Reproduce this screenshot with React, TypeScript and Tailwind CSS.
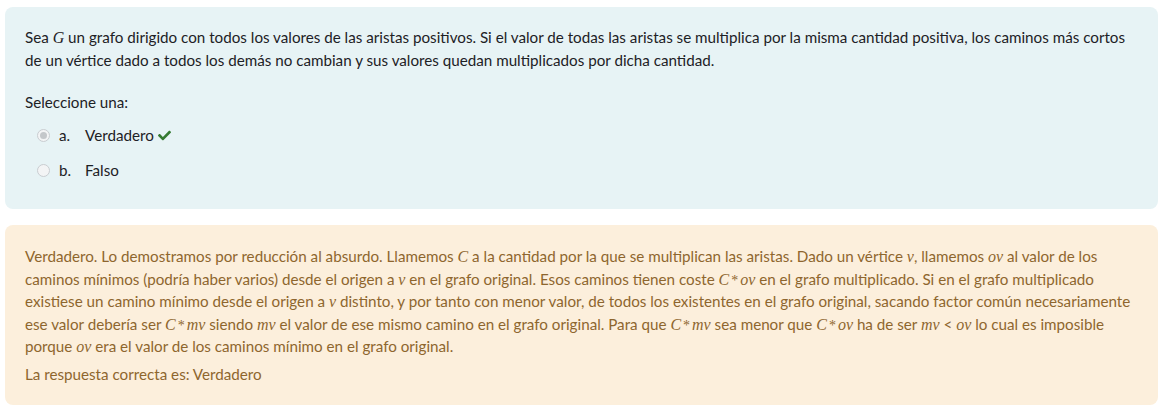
import React from 'react';

const M = ({ children }: { children: React.ReactNode }) => (
  <span className="italic text-[16px] leading-none" style={{ fontFamily: '"Liberation Serif", "DejaVu Serif", serif' }}>
    {children}
  </span>
);

// C * x rendered like MathJax: italic C, raised asterisk, thin spacing
const Prod = ({ x }: { x: string }) => (
  <>
    <M>C</M>
    <span className="mx-[2px] text-[14px] leading-none" style={{ fontFamily: '"Liberation Serif", serif' }}>*</span>
    <M>{x}</M>
  </>
);

function Radio({ checked }: { checked?: boolean }) {
  return (
    <span className="relative inline-flex h-[13px] w-[13px] items-center justify-center rounded-full border border-[#c9cdd1] bg-[#f3f4f5]">
      {checked && <span className="h-[7px] w-[7px] rounded-full bg-[#c4c7ca]" />}
    </span>
  );
}

function Check() {
  return (
    <svg viewBox="0 0 512 512" className="ml-1 h-[13px] w-[13px] fill-[#357a32]">
      <path d="M173.9 439.4l-166.4-166.4c-10-10-10-26.2 0-36.2l36.2-36.2c10-10 26.2-10 36.2 0L192 312.7 432.1 72.6c10-10 26.2-10 36.2 0l36.2 36.2c10 10 10 26.2 0 36.2l-294.4 294.4c-10 10-26.2 10-36.2 0z" />
    </svg>
  );
}

export default function App() {
  return (
    <div
      className="flex w-[1163px] flex-col gap-4 bg-white px-[5px] pt-[7px] text-[15.2px] leading-[22.5px]"
      style={{ fontFamily: 'Lato, "Segoe UI", "Liberation Sans", sans-serif' }}
    >
      {/* question */}
      <div className="h-[202px] rounded-lg bg-[#e7f3f5] px-5 pt-[19px] text-[#1d2125]">
        <p className="whitespace-nowrap">
          Sea <M>G</M> un grafo dirigido con todos los valores de las aristas positivos. Si el valor de todas las aristas se multiplica por la misma cantidad positiva, los caminos más cortos
          <br />
          de un vértice dado a todos los demás no cambian y sus valores quedan multiplicados por dicha cantidad.
        </p>
        <p className="mt-[20px]">Seleccione una:</p>
        <div className="mt-[4px] flex flex-col">
          <div className="flex h-[35px] items-center pl-[12px]">
            <Radio checked />
            <span className="ml-[9px] w-[26px]">a.</span>
            <span>Verdadero</span>
            <Check />
          </div>
          <div className="flex h-[35px] items-center pl-[12px]">
            <Radio />
            <span className="ml-[9px] w-[26px]">b.</span>
            <span>Falso</span>
          </div>
        </div>
      </div>

      {/* feedback */}
      <div className="h-[180px] rounded-lg bg-[#fcefdc] px-5 pt-[20px] text-[#8e662e]">
        <p className="whitespace-nowrap">
          Verdadero. Lo demostramos por reducción al absurdo. Llamemos <M>C</M> a la cantidad por la que se multiplican las aristas. Dado un vértice <M>v</M>, llamemos <M>ov</M> al valor de los
          <br />
          caminos mínimos (podría haber varios) desde el origen a <M>v</M> en el grafo original. Esos caminos tienen coste <Prod x="ov" /> en el grafo multiplicado. Si en el grafo multiplicado
          <br />
          existiese un camino mínimo desde el origen a <M>v</M> distinto, y por tanto con menor valor, de todos los existentes en el grafo original, sacando factor común necesariamente
          <br />
          ese valor debería ser <Prod x="mv" /> siendo <M>mv</M> el valor de ese mismo camino en el grafo original. Para que <Prod x="mv" /> sea menor que <Prod x="ov" /> ha de ser <M>mv</M> &lt; <M>ov</M> lo cual es imposible
          <br />
          porque <M>ov</M> era el valor de los caminos mínimo en el grafo original.
        </p>
        <p className="mt-[5px]">La respuesta correcta es: Verdadero</p>
      </div>
    </div>
  );
}
